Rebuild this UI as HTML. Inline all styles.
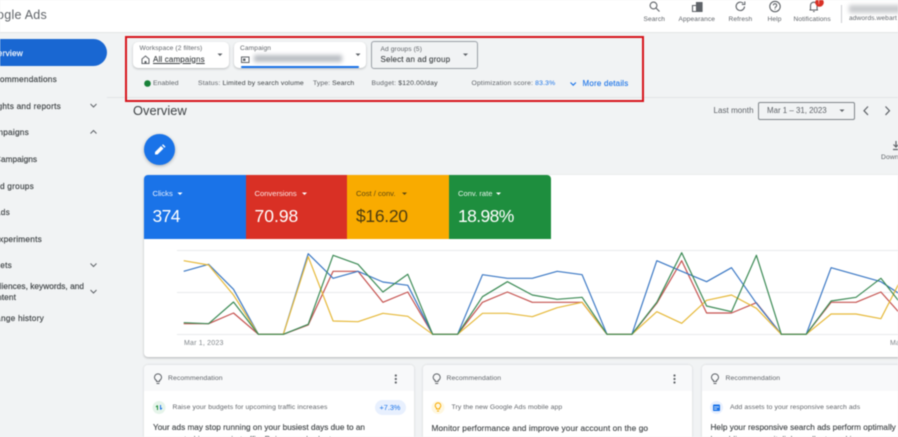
<!DOCTYPE html>
<html lang="en"><head><meta charset="utf-8"><title>Google Ads Overview</title>
<style>
html,body{margin:0;padding:0;width:898px;height:437px;overflow:hidden;background:#f1f3f4}
#w{position:relative;width:898px;height:437px;overflow:hidden;filter:blur(.45px);font-family:"Liberation Sans",sans-serif;color:#3c4043}
#w div,#w span.t{position:absolute}
.t{position:absolute;white-space:nowrap;line-height:0}
.n{font-size:8.3px;letter-spacing:.22px;color:#3c4043;-webkit-text-stroke:.15px #3c4043}
.s{font-size:6.8px;color:#5f6368;letter-spacing:.18px}
.h{font-size:6.6px;color:#5f6368;letter-spacing:.1px}
.w{color:#fff}
.v{font-size:17.5px}
.l{font-size:7.6px}
svg{position:absolute;overflow:visible}
</style></head><body><div id="w">
<!-- header -->
<div style="left:0;top:0;width:898px;height:32px;background:#fff;border-bottom:1px solid #e3e5e7"></div>
<span class="t" style="right:851px;top:15px;font-size:12.5px;color:#5f6368;letter-spacing:.25px">Google Ads</span>
<svg style="left:0;top:0" width="898" height="32" fill="none" stroke="#5f6368" stroke-width="1.1">
<circle cx="653.5" cy="5.5" r="3.4"/><path d="M656 8l3.5 3.5"/>
<path d="M692.500 11.500V5.500h4V11.500zM696.500 11.500V2.500h5.500v9z" /><path d="M697 3h5v8h-5z" fill="#5f6368"/>
<path d="M744.500 6.500a4.200 4.200 0 1 1-1.300-3.200"/><path d="M744.800 1.500v3h-3" />
<circle cx="775" cy="6.500" r="5.200"/><path d="M773.300 5.300a1.700 1.700 0 1 1 2.600 1.500c-.6.400-.9.700-.9 1.400M775 9v.6"/>
<path d="M810.500 10V5.500a3.300 3.300 0 0 1 6.600 0V10M809.500 10h8.500M813 11.500h1.700"/>
<circle cx="819.500" cy="2.500" r="4.300" fill="#d93025" stroke="none"/>
<path d="M841.500 5v18" stroke="#d0d2d5"/>
</svg>
<span class="t" style="left:819px;top:2.500px;font-size:6px;color:#fff;margin-left:-1px">!</span>
<span class="t h" style="left:643.500px;top:19.500px">Search</span>
<span class="t h" style="left:678.500px;top:19.500px">Appearance</span>
<span class="t h" style="left:728.500px;top:19.500px">Refresh</span>
<span class="t h" style="left:767.500px;top:19.500px">Help</span>
<span class="t h" style="left:793.500px;top:19.500px">Notifications</span>
<span class="t h" style="left:849px;top:19px">adwords.webart</span>
<div style="left:849px;top:5px;width:60px;height:8px;background:#c9cbce;filter:blur(2px)"></div>

<!-- sidebar -->
<div style="left:-20px;top:39px;width:126.500px;height:27px;background:#1967d2;border-radius:0 14px 14px 0"></div>
<span class="t n w" style="right:875px;top:52.500px;color:#fff;-webkit-text-stroke:.15px #fff">Overview</span>
<span class="t n" style="right:841px;top:79px">Recommendations</span>
<span class="t n" style="right:837px;top:105.500px">Insights and reports</span>
<span class="t n" style="right:869px;top:132px">Campaigns</span>
<span class="t n" style="right:861px;top:158.500px;letter-spacing:0">Campaigns</span>
<span class="t n" style="right:864px;top:185.500px">Ad groups</span>
<span class="t n" style="right:888px;top:212px">Ads</span>
<span class="t n" style="right:856px;top:238.500px">Experiments</span>
<span class="t n" style="right:886px;top:265px">Assets</span>
<span class="t n" style="right:814px;top:286px;letter-spacing:.02px">Audiences, keywords, and</span>
<span class="t n" style="right:882px;top:297px;letter-spacing:.1px">content</span>
<span class="t n" style="right:854px;top:318px">Change history</span>
<svg style="left:0;top:0" width="110" height="310" fill="none" stroke="#5f6368" stroke-width="1">
<path d="M90.500 104l3 3 3-3M90.500 133.500l3-3 3 3M90.500 263.500l3 3 3-3M90.500 290l3 3 3-3"/>
</svg>

<!-- filter band -->
<div style="left:107px;top:97px;width:791px;height:1px;background:#e2e4e7"></div>
<div style="left:133px;top:42px;width:96px;height:26px;background:#fff;border-radius:5px;box-shadow:0 1px 2px rgba(60,64,67,.3)"></div>
<div style="left:234px;top:42px;width:132px;height:26px;background:#fff;border-radius:5px;box-shadow:0 1px 2px rgba(60,64,67,.3)"></div>
<div style="left:241px;top:66px;width:118px;height:2px;background:#1a73e8;border-radius:1px"></div>
<div style="left:371px;top:41px;width:104.500px;height:25.500px;border:1px solid #9aa0a6;border-radius:3px;box-sizing:content-box"></div>
<span class="t" style="left:139.500px;top:49px;font-size:6.6px;color:#5f6368;letter-spacing:.12px">Workspace (2 filters)</span>
<span class="t" style="left:153px;top:59.500px;font-size:8px;color:#3c4043;text-decoration:underline;letter-spacing:.15px;-webkit-text-stroke:.12px #3c4043;line-height:1;margin-top:-4px">All campaigns</span>
<span class="t" style="left:240px;top:48.500px;font-size:6.600px;color:#5f6368;letter-spacing:.12px">Campaign</span>
<div style="left:254px;top:55px;width:88px;height:7px;background:#b8bcc2;filter:blur(2px)"></div>
<span class="t" style="left:380.500px;top:50px;font-size:6.600px;color:#5f6368;letter-spacing:.12px">Ad groups (5)</span>
<span class="t" style="left:380.500px;top:59.500px;font-size:8px;color:#3c4043;letter-spacing:.14px;-webkit-text-stroke:.12px #3c4043">Select an ad group</span>
<svg style="left:0;top:0" width="500" height="100" fill="#5f6368">
<path d="M217.500 53.500h5l-2.500 2.500zM355.500 53.500h5l-2.500 2.500zM463 53.500h5l-2.500 2.500z"/>
<path d="M142 59l3.500-3 3.500 3V63.500h-7z" fill="none" stroke="#5f6368"/>
<path d="M144.500 63.500V61h2v2.500"/>
<rect x="241.500" y="57" width="7.500" height="5.500" fill="none" stroke="#5f6368"/>
<rect x="243" y="58.500" width="2.500" height="2.500"/>
<circle cx="147.500" cy="83.500" r="3.300" fill="#188038"/>
</svg>
<span class="t s" style="left:153px;top:83.500px;letter-spacing:.1px">Enabled</span>
<span class="t s" style="left:198px;top:83.500px">Status: <span style="color:#3c4043">Limited by search volume</span></span>
<span class="t s" style="left:313px;top:83.500px;letter-spacing:.1px">Type: <span style="color:#3c4043">Search</span></span>
<span class="t s" style="left:371.500px;top:83.500px">Budget: <span style="color:#3c4043">$120.00/day</span></span>
<span class="t s" style="left:471.500px;top:83.500px">Optimization score: <span style="color:#1a73e8">83.3%</span></span>
<span class="t" style="left:582.500px;top:83.500px;font-size:8px;color:#1a73e8;letter-spacing:.2px;-webkit-text-stroke:.1px #1a73e8">More details</span>
<svg style="left:0;top:0" width="600" height="100" fill="none" stroke="#1a73e8" stroke-width="1.1"><path d="M570.500 82.500l2.700 2.700 2.700-2.700"/></svg>
<!-- red box -->
<div style="left:125px;top:36px;width:514.500px;height:62px;border:2px solid #d6131b;box-sizing:content-box"></div>

<!-- overview row -->
<span class="t" style="left:133px;top:111px;font-size:12.800px;color:#3c4043;letter-spacing:.05px">Overview</span>
<span class="t" style="left:713.500px;top:111px;font-size:8px;color:#5f6368;letter-spacing:.05px">Last month</span>
<div style="left:758px;top:102px;width:95px;height:16px;border:1px solid #80868b;border-radius:2px"></div>
<span class="t" style="left:767px;top:111px;font-size:7.900px;color:#5f6368;letter-spacing:0">Mar 1 – 31, 2023</span>
<svg style="left:0;top:0" width="898" height="170" fill="none" stroke="#5f6368" stroke-width="1.200">
<path d="M839.500 109.500h5l-2.500 2.500z" fill="#5f6368" stroke="none"/>
<path d="M868 106.500l-4 4.200 4 4.200M885.500 106.500l4 4.200-4 4.200"/>
<path d="M896 141v6M893.500 144.500l2.500 2.500 2.500-2.500M893 149.500h6"/>
</svg>
<span class="t" style="left:881px;top:157.500px;font-size:6.800px;color:#5f6368;letter-spacing:.1px">Download</span>
<!-- FAB -->
<div style="left:143.500px;top:134px;width:31px;height:31px;border-radius:50%;background:#1a73e8;box-shadow:0 1px 3px rgba(60,64,67,.4)"></div>
<svg style="left:0;top:0" width="200" height="170"><path d="M155 154.500v-2.500l6-6 2.500 2.500-6 6zM162 145.200l1-1 2.500 2.500-1 1z" fill="#fff"/></svg>

<!-- chart card -->
<div style="left:144px;top:175px;width:770px;height:182px;background:#fff;border-radius:4px;box-shadow:0 1px 2px rgba(60,64,67,.35)"></div>
<div style="left:144px;top:175px;width:102px;height:64px;background:#1a73e8;border-radius:4px 0 0 0"></div>
<div style="left:245.500px;top:175px;width:102px;height:64px;background:#d93025"></div>
<div style="left:347px;top:175px;width:102px;height:64px;background:#f9ab00"></div>
<div style="left:449px;top:175px;width:102px;height:64px;background:#1e8e3e;border-radius:0 4px 0 0"></div>
<span class="t l w" style="left:152.500px;top:194px;color:#e8f0fe">Clicks</span>
<span class="t l w" style="left:254.500px;top:194px;color:#fce8e6">Conversions</span>
<span class="t l" style="left:356px;top:194px;color:#5f4a10">Cost / conv.</span>
<span class="t l w" style="left:458px;top:194px;color:#e6f4ea">Conv. rate</span>
<span class="t v w" style="left:152.500px;top:215.500px;color:#fff;letter-spacing:-.6px">374</span>
<span class="t v w" style="left:254.500px;top:215.500px;color:#fff">70.98</span>
<span class="t v" style="left:356px;top:215.500px;color:#4e3d10;letter-spacing:-.3px">$16.20</span>
<span class="t v w" style="left:458px;top:215.500px;color:#fff;letter-spacing:-.6px">18.98%</span>
<svg style="left:0;top:0" width="600" height="200"><path d="M177.500 192.500h5l-2.500 2.500zM302 192.500h5l-2.500 2.500z" fill="#fff"/><path d="M402 192.500h5l-2.500 2.500z" fill="#5f4a10"/><path d="M496 192.500h5l-2.500 2.500z" fill="#fff"/></svg>

<svg style="left:0;top:0" width="898" height="360" fill="none" stroke-width="1.200" stroke-linejoin="round">
<path d="M177 250.500H898M177 292.500H898M177 334.500H898" stroke="#e8eaed" stroke-width="1"/>
<polyline stroke="#c5524f" points="183.700,323.700 208.600,323.700 233.500,313 258.400,334.300 283.300,334.300 308.200,325 333.100,271.300 358,271.300 382.900,302.300 407.800,292 432.700,334.300 457.600,334.300 482.500,302.300 507.400,292 532.300,302.300 557.200,302.300 582.100,302.300 607,334.300 631.900,334.300 656.800,303.300 681.700,260.700 706.600,313 731.500,313 756.400,302.700 781.300,334.300 806.200,334.300 831.100,302.300 856,302.300 880.900,292 905.800,320"/>
<polyline stroke="#3b78c4" points="183.700,271.300 208.600,264.300 233.500,289.300 258.400,334.300 283.300,334.300 308.200,253.700 333.100,278.300 358,271.300 382.900,282 407.800,285.300 432.700,334.300 457.600,334.300 482.500,274.700 507.400,278.300 532.300,278.300 557.200,271.300 582.100,274.700 607,334.300 631.900,334.300 656.800,260.700 681.700,271.300 706.600,281.700 731.500,267.700 756.400,303.300 781.300,334.300 806.200,334.300 831.100,267.700 856,274.700 880.900,281.700 905.800,298"/>
<polyline stroke="#e6b93a" points="183.700,260.700 208.600,265 233.500,295 258.400,334.300 283.300,334.300 308.200,256.700 333.100,321 358,321.700 382.900,313.300 407.800,316.300 432.700,334.300 457.600,334.300 482.500,313.300 507.400,313.300 532.300,316.700 557.200,307.700 582.100,302.300 607,334.300 631.900,334.300 656.800,311.700 681.700,323.300 706.600,300.300 731.500,295 756.400,308.300 781.300,334.300 806.200,334.300 831.100,314 856,314 880.900,318.700 905.800,270"/>
<polyline stroke="#3c8a55" points="183.700,322.700 208.600,323.700 233.500,302 258.400,334.300 283.300,334.300 308.200,324.300 333.100,255.300 358,264.300 382.900,292 407.800,274.300 432.700,334.300 457.600,334.300 482.500,296.700 507.400,281.700 532.300,295 557.200,299.300 582.100,297.300 607,334.300 631.900,334.300 656.800,302.300 681.700,252.700 706.600,306 731.500,311.700 756.400,255.300 781.300,334.300 806.200,334.300 831.100,301 856,297.300 880.900,278.300 905.800,310"/>
</svg>
<span class="t" style="left:184px;top:343.500px;font-size:7px;color:#80868b;letter-spacing:.2px">Mar 1, 2023</span>
<span class="t" style="left:890px;top:343.500px;font-size:7px;color:#80868b;letter-spacing:.2px">Mar 31</span>

<!-- recommendation cards -->
<div style="left:144px;top:365px;width:270px;height:90px;background:#fff;border-radius:4px;box-shadow:0 0 2px rgba(60,64,67,.2);overflow:hidden"><div style="left:0;top:0;width:100%;height:26px;background:#f8f9fa"></div></div>
<div style="left:423px;top:365px;width:269px;height:90px;background:#fff;border-radius:4px;box-shadow:0 0 2px rgba(60,64,67,.2);overflow:hidden"><div style="left:0;top:0;width:100%;height:26px;background:#f8f9fa"></div></div>
<div style="left:702px;top:365px;width:220px;height:90px;background:#fff;border-radius:4px;box-shadow:0 0 2px rgba(60,64,67,.2);overflow:hidden"><div style="left:0;top:0;width:100%;height:26px;background:#f8f9fa"></div></div>
<span class="t" style="left:168px;top:378.500px;font-size:6.800px;color:#5f6368;letter-spacing:.1px">Recommendation</span>
<span class="t" style="left:446.500px;top:378.500px;font-size:6.800px;color:#5f6368;letter-spacing:.1px">Recommendation</span>
<span class="t" style="left:725.500px;top:378.500px;font-size:6.800px;color:#5f6368;letter-spacing:.1px">Recommendation</span>
<svg style="left:0;top:0" width="898" height="437" fill="none" stroke="#5f6368" stroke-width="1">
<path d="M159.500 381.500v-1a3.500 3.500 0 1 0-3 0v1zM156.500 383.500h3"/>
<path d="M438.200 381.500v-1a3.500 3.500 0 1 0-3 0v1zM435.200 383.500h3"/>
<path d="M716.500 381.500v-1a3.500 3.500 0 1 0-3 0v1zM713.500 383.500h3"/>
<g fill="#5f6368" stroke="none"><circle cx="395.800" cy="375.500" r="1.100"/><circle cx="395.800" cy="379" r="1.100"/><circle cx="395.800" cy="382.500" r="1.100"/><circle cx="674.500" cy="375.500" r="1.100"/><circle cx="674.500" cy="379" r="1.100"/><circle cx="674.500" cy="382.500" r="1.100"/></g>
<circle cx="159" cy="407.500" r="6.500" fill="#e6f4ea" stroke="none"/>
<path d="M157.500 410v-4.500M156 407l1.500-1.500" stroke="#1e8e3e"/><path d="M160.500 405v4.500M162 408l-1.500 1.500" stroke="#1a73e8"/>
<circle cx="438" cy="407.500" r="6.500" fill="#fef7e0" stroke="none"/>
<path d="M439.500 409v-1a2.800 2.800 0 1 0-3 0v1zM437 411h2" stroke="#f9ab00"/>
<circle cx="716.500" cy="407.500" r="6.500" fill="#e8f0fe" stroke="none"/>
<rect x="713" y="404.500" width="7" height="6.500" rx=".8" fill="#1a73e8" stroke="none"/><path d="M714 407h5M714 409h3" stroke="#fff" stroke-width=".8"/>
</svg>
<span class="t" style="left:172.500px;top:407.500px;font-size:6.800px;color:#5f6368;letter-spacing:.12px">Raise your budgets for upcoming traffic increases</span>
<div style="left:374.500px;top:400px;width:31px;height:15px;border-radius:8px;background:#e8f0fe"></div>
<span class="t" style="left:379.500px;top:407.500px;font-size:7.300px;color:#1a73e8">+7.3%</span>
<span class="t" style="left:451.500px;top:407.500px;font-size:6.800px;color:#5f6368;letter-spacing:.1px">Try the new Google Ads mobile app</span>
<span class="t" style="left:730px;top:407.500px;font-size:6.800px;color:#5f6368;letter-spacing:.1px">Add assets to your responsive search ads</span>
<span class="t" style="left:153px;top:428px;font-size:8.200px;color:#3c4043;letter-spacing:.02px;-webkit-text-stroke:.12px #3c4043">Your ads may stop running on your busiest days due to an</span>
<span class="t" style="left:153px;top:440px;font-size:8.200px;color:#3c4043;letter-spacing:.02px">unexpected increase in traffic. Raise your budget</span>
<span class="t" style="left:431.500px;top:428px;font-size:8.300px;color:#3c4043;letter-spacing:.1px;-webkit-text-stroke:.12px #3c4043">Monitor performance and improve your account on the go</span>
<span class="t" style="left:710.500px;top:428px;font-size:8.200px;color:#3c4043;letter-spacing:.02px;-webkit-text-stroke:.12px #3c4043">Help your responsive search ads perform optimally</span>
<span class="t" style="left:710.500px;top:440px;font-size:8.200px;color:#3c4043;letter-spacing:.02px">by adding more sitelinks, callouts and images</span>
</div></body></html>
